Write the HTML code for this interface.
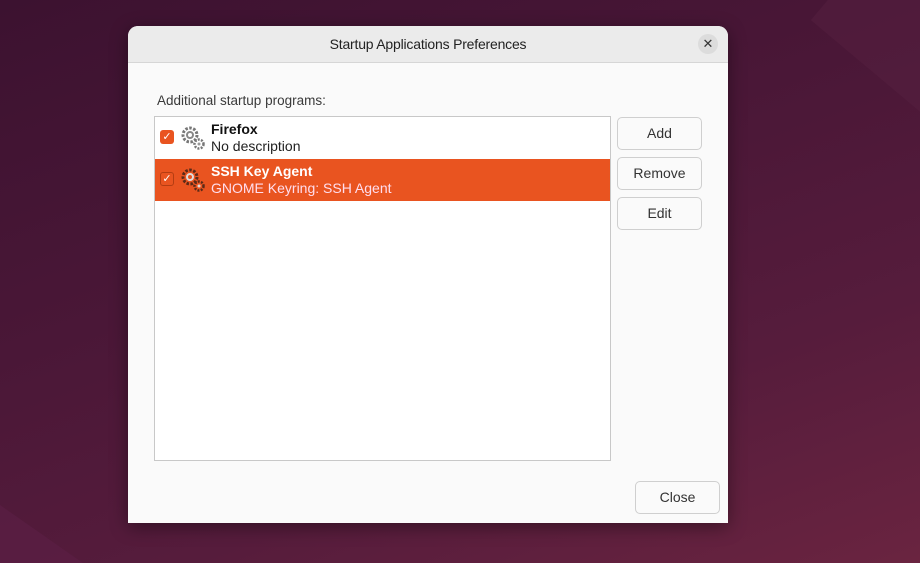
<!DOCTYPE html>
<html style="width:920px;height:563px;overflow:hidden;margin:0"><head><style>
body{margin:0;width:920px;height:563px;overflow:hidden;font-family:"Liberation Sans",sans-serif;position:relative}
.wrap{position:absolute;left:0;top:0;width:920px;height:563px;overflow:hidden;
background:linear-gradient(160deg,#3c1230 0%,#4a1737 40%,#561c3c 70%,#6a2440 100%)}
.bgA{position:absolute;left:840px;top:-60px;width:300px;height:200px;background:#55203f;transform:rotate(40deg);opacity:.5}
.bgB{position:absolute;left:-140px;top:520px;width:260px;height:200px;background:#5e2048;transform:rotate(35deg);opacity:.5}
.dlg{position:absolute;left:128px;top:26px;width:600px;height:497px;background:#fafafa;border-radius:10px 10px 0 0;overflow:hidden;box-shadow:0 4px 18px rgba(0,0,0,.4)}
.hdr{height:36px;background:#ebebeb;border-bottom:1px solid #d6d6d6;text-align:center;line-height:36px;font-size:14px;color:#222;letter-spacing:-0.2px}
.x{position:absolute;left:570px;top:8px;width:20px;height:20px;border-radius:50%;background:#dcdcdc;text-align:center;line-height:19px;font-size:13px;color:#333}
.lbl{position:absolute;left:29px;top:67px;font-size:13.5px;color:#3a3a3a}
.list{position:absolute;left:26px;top:90px;width:455px;height:343px;background:#fff;border:1px solid #c8c8c8}
.row{position:absolute;left:0;width:455px;height:42px}
.cb{position:absolute;left:5px;top:13px;width:14px;height:14px;border-radius:3px;background:#e95420;color:#fff;font-size:11px;line-height:14px;text-align:center}
.t1{position:absolute;left:56px;top:4px;font-size:14px;font-weight:bold}
.t2{position:absolute;left:56px;top:21px;font-size:14px}
.g{position:absolute;left:25px;top:7px}
.btn{position:absolute;width:83px;height:31px;border:1px solid #cfcfcf;border-radius:5px;background:#fafafa;text-align:center;line-height:31px;font-size:14px;color:#333}
</style></head><body>
<div class="wrap"><div class="bgA"></div><div class="bgB"></div></div>
<div class="dlg">
<div class="hdr">Startup Applications Preferences</div>
<div class="x">✕</div>
<div class="lbl">Additional startup programs:</div>
<div class="list">
 <div class="row" style="top:0">
  <div class="cb">✓</div>
  <svg class="g" width="26" height="28" viewBox="0 0 26 28"><circle cx="10" cy="11" r="7" fill="none" stroke="#777" stroke-width="3" stroke-dasharray="2.5 1.5"/><circle cx="10" cy="11" r="3" fill="none" stroke="#888" stroke-width="2"/><circle cx="19" cy="20" r="4.5" fill="none" stroke="#777" stroke-width="2.5" stroke-dasharray="2 1.3"/><circle cx="19" cy="20" r="1.5" fill="#999"/></svg>
  <div class="t1" style="color:#111">Firefox</div>
  <div class="t2" style="color:#222">No description</div>
 </div>
 <div class="row" style="top:42px;background:#e95420">
  <div class="cb" style="border:1px solid #b43d12;width:12px;height:12px;line-height:12px">✓</div>
  <svg class="g" width="26" height="28" viewBox="0 0 26 28"><circle cx="10" cy="11" r="7" fill="none" stroke="#5a2a18" stroke-width="3" stroke-dasharray="2.5 1.5"/><circle cx="10" cy="11" r="3" fill="none" stroke="#ddd" stroke-width="2"/><circle cx="19" cy="20" r="4.5" fill="none" stroke="#5a2a18" stroke-width="2.5" stroke-dasharray="2 1.3"/><circle cx="19" cy="20" r="1.5" fill="#ddd"/></svg>
  <div class="t1" style="color:#fff">SSH Key Agent</div>
  <div class="t2" style="color:#fde">GNOME Keyring: SSH Agent</div>
 </div>
</div>
<div class="btn" style="left:489px;top:91px">Add</div>
<div class="btn" style="left:489px;top:131px">Remove</div>
<div class="btn" style="left:489px;top:171px">Edit</div>
<div class="btn" style="left:507px;top:455px">Close</div>
</div>
</body></html>
